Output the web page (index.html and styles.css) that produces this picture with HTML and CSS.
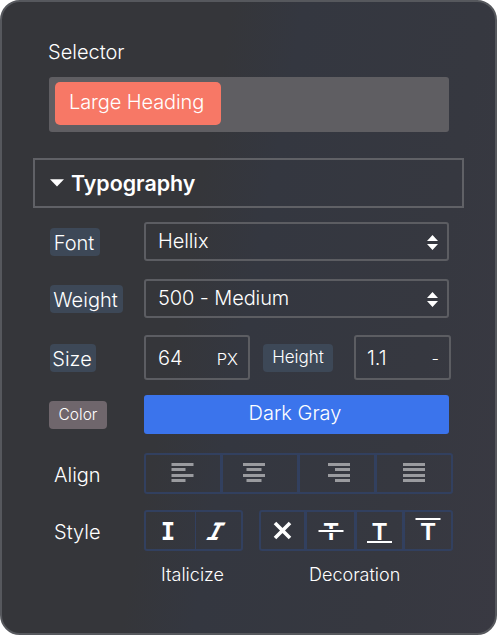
FILE: index.html
```html
<!DOCTYPE html>
<html lang="en">
<head>
    <meta charset="UTF-8">
    <meta name="viewport" content="width=device-width, initial-scale=1.0">
    <title>Typography Panel</title>
    <link rel="stylesheet" href="styles.css">
</head>
<body>

    <div class="panel">
        <div class="selector-label">Selector</div>
        <div class="selector-box">
            <span class="tag">Large Heading</span>
        </div>

        <div class="section-header">
            <svg class="caret" width="14" height="8" viewBox="0 0 14 8"><path d="M0 .3h14L7 7.5z"/></svg>
            <h2>Typography</h2>
        </div>

        <div class="row font-row">
            <div class="label-cell"><span class="badge font-badge">Font</span></div>
            <div class="select">
                <span>Hellix</span>
                <svg class="arrows" width="11" height="15" viewBox="0 0 11 15"><path d="M5.5 0L11 6H0zM0 9h11l-5.5 6z"/></svg>
            </div>
        </div>

        <div class="row weight-row">
            <div class="label-cell"><span class="badge weight-badge">Weight</span></div>
            <div class="select">
                <span>500 - Medium</span>
                <svg class="arrows" width="11" height="15" viewBox="0 0 11 15"><path d="M5.5 0L11 6H0zM0 9h11l-5.5 6z"/></svg>
            </div>
        </div>

        <div class="row size-row">
            <div class="label-cell"><span class="badge size-badge">Size</span></div>
            <div class="size-fields">
                <div class="input"><span>64</span><span class="unit">PX</span></div>
                <span class="badge height-badge">Height</span>
                <div class="input height-input"><span>1.1</span><span class="unit">-</span></div>
            </div>
        </div>

        <div class="row color-row">
            <div class="label-cell"><span class="badge color-badge">Color</span></div>
            <button class="color-button">Dark Gray</button>
        </div>

        <div class="row align-row">
            <div class="label-cell"><span class="plain">Align</span></div>
            <div class="group align-group">
                <button><svg width="74" height="37" viewBox="0 0 74 37"><path d="M25.5 8h22v3h-22zM25.5 13h14v3h-14zM25.5 19h22v3h-22zM25.5 24h14v3h-14z"/></svg></button>
                <button><svg width="74" height="37" viewBox="0 0 74 37"><path d="M20 8h22v3H20zM23.5 13h15v3h-15zM20 19h22v3H20zM23.5 24h15v3h-15z"/></svg></button>
                <button><svg width="74" height="37" viewBox="0 0 74 37"><path d="M28 8h22v3H28zM35 13h15v3H35zM28 19h22v3H28zM35 24h15v3H35z"/></svg></button>
                <button><svg width="74" height="37" viewBox="0 0 74 37"><path d="M26 8h22v3H26zM26 13h22v3H26zM26 19h22v3H26zM26 24h22v3H26z"/></svg></button>
            </div>
        </div>

        <div class="row style-row">
            <div class="label-cell"><span class="plain">Style</span></div>
            <div class="style-groups">
                <div class="group italic-group">
                    <button><svg width="49" height="37" viewBox="0 0 49 37"><text class="slab" x="22" y="27.5">I</text></svg></button>
                    <button><svg width="46" height="37" viewBox="0 0 46 37"><text class="slab" transform="translate(15.5 27.5) skewX(-27)">I</text></svg></button>
                </div>
                <div class="group decoration-group">
                    <button><svg width="43" height="37" viewBox="0 0 43 37"><path class="line thick" d="M14 11l15 15M29 11l-15 15"/></svg></button>
                    <button><svg width="47" height="37" viewBox="0 0 47 37"><text x="24" y="27.5">T</text><path class="gap" d="M11.5 19h25"/><path class="line" d="M11.5 19h25"/></svg></button>
                    <button><svg width="45" height="37" viewBox="0 0 45 37"><text x="22.5" y="27.5">T</text><path class="line" d="M10 30h25"/></svg></button>
                    <button><svg width="45" height="37" viewBox="0 0 45 37"><text x="23" y="27.5">T</text><path class="line" d="M10.5 7h25"/></svg></button>
                </div>
            </div>
        </div>

        <div class="captions">
            <span>Italicize</span>
            <span>Decoration</span>
        </div>
    </div>

</body>
</html>
```
FILE: styles.css
```css
* {
    margin: 0;
    padding: 0;
    box-sizing: border-box;
}

body {
    font-family: Inter, Arial, sans-serif;
    background: #fff;
}

.panel {
    width: 497px;
    height: 635px;
    border: 2px solid #56585d;
    border-radius: 20px;
    background: linear-gradient(100deg, #35363a 0%, #35363a 38%, #343740 50%, #363840 80%, #393942 100%);
    color: #fff;
    font-size: 20px;
    font-weight: 330;
    line-height: 24px;
    overflow: hidden;
}

.selector-label {
    margin: 38px 0 0 46px;
    height: 37px;
}

.selector-box {
    margin-left: 47px;
    width: 400px;
    height: 55px;
    padding: 5px 6px;
    border-radius: 3px;
    background: #5f5e62;
}

.tag {
    display: block;
    width: 166px;
    height: 43px;
    padding: 8px 0 0 14px;
    border-radius: 5px;
    background: #f77866;
    letter-spacing: -0.1px;
}

.section-header {
    display: flex;
    align-items: center;
    width: 431px;
    height: 50px;
    margin: 26px 0 0 31px;
    padding-left: 15px;
    border: 2px solid #606166;
}

.caret {
    margin-right: 7px;
    fill: #fff;
}

h2 {
    font-size: 21.4px;
    font-weight: 600;
}

.row {
    display: flex;
    margin-left: 47px;
}

.label-cell {
    width: 95px;
    flex-shrink: 0;
}

.badge {
    display: block;
    height: 28px;
    margin-left: 1px;
    padding: 3px 2px 0 0;
    border-radius: 4px;
    background: #3d4857;
    text-align: center;
    white-space: nowrap;
}

.font-row {
    margin-top: 14px;
}

.font-badge {
    width: 50px;
    margin-top: 6px;
}

.select {
    display: flex;
    justify-content: space-between;
    align-items: center;
    width: 305px;
    height: 39px;
    padding: 0 9px 1px 12px;
    border: 2px solid #5c5d62;
    border-radius: 3px;
    letter-spacing: -0.1px;
}

.arrows {
    margin-top: 3px;
    fill: #fff;
}

.weight-row {
    margin-top: 18px;
}

.weight-badge {
    width: 73px;
    margin-top: 6px;
}

.size-row {
    margin-top: 17px;
}

.size-badge {
    width: 46px;
    margin-top: 9px;
}

.size-fields {
    display: flex;
}

.input {
    display: flex;
    justify-content: space-between;
    width: 106px;
    height: 45px;
    padding: 9px 10px 0 12px;
    border: 2px solid #5c5d62;
    border-radius: 3px;
}

.unit {
    margin-top: 1px;
    font-size: 16.5px;
}

.height-badge {
    width: 70px;
    margin: 9px 0 0 13px;
    padding: 1px 0 0;
    font-size: 17px;
}

.height-input {
    width: 97px;
    margin-left: 21px;
    padding-left: 11px;
}

.color-row {
    margin-top: 15px;
}

.color-badge {
    width: 58px;
    margin: 6px 0 0;
    padding: 2px 0 0;
    background: #6f666c;
    font-size: 15.5px;
}

.color-button {
    width: 305px;
    height: 39px;
    padding: 0 3px 4px 0;
    border: none;
    border-radius: 3px;
    background: #3b74ec;
    color: #fff;
    font: inherit;
}

.align-row {
    margin-top: 19px;
}

.plain {
    display: block;
    margin: 10px 0 0 5px;
}

.group {
    display: flex;
    height: 41px;
    border: 2px solid #32405f;
    border-radius: 3px;
}

.group button {
    border: none;
    border-left: 3px solid #32405f;
    background: none;
}

.group button:first-child {
    border-left: none;
}

.group svg {
    display: block;
}

.align-group {
    width: 309px;
}

.align-group svg {
    fill: #9a9b9f;
}

.style-row {
    margin-top: 16px;
}

.style-groups {
    display: flex;
}

.italic-group {
    width: 99px;
}

.italic-group button {
    border-left-width: 1px;
}

.decoration-group {
    width: 194px;
    margin-left: 16px;
}

.style-groups text {
    fill: #fff;
    font-size: 24px;
    font-weight: 700;
    text-anchor: middle;
}

.style-groups .slab {
    font-family: "DejaVu Sans Mono", monospace;
}

.line {
    fill: none;
    stroke: #fff;
    stroke-width: 1.8;
}

.thick {
    stroke-width: 3.6;
}

.gap {
    stroke: #363840;
    stroke-width: 4;
}

.captions {
    display: flex;
    gap: 85px;
    margin: 12px 0 0 159px;
    font-size: 18px;
}
```
